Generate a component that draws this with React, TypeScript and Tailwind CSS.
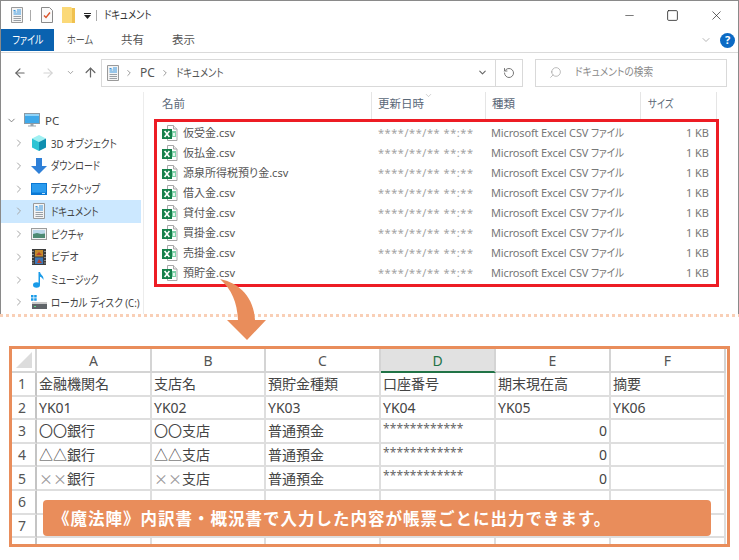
import { ArrowLeft, ArrowRight, ArrowUp, ChevronDown, ChevronRight, Minus, RotateCw, Search, Square, X } from 'lucide-react'
import type { ReactNode } from 'react'

const FONT = "font-['Noto_Sans','Noto_Sans_CJK_JP',sans-serif] [font-feature-settings:'palt']"

function DocIcon({ className = '' }: { className?: string }) {
  return (
    <svg viewBox="0 0 14 16" className={`w-[14px] h-4 shrink-0 ${className}`}>
      <path d="M1.5.5h11v15h-11z" fill="#f4f4f4" stroke="#9a9a9a" />
      <path d="M7 3h4M3.5 5h3M7 5h4M3.5 7h7.5" stroke="#3a96dd" strokeWidth="1" />
      <path d="M3.5 9.5h7.5M3.5 11.5h7.5M3.5 13.5h7.5" stroke="#9aa0a6" strokeWidth="1" />
      <path d="M3.5 3h2v1h-2z" fill="#3a96dd" />
    </svg>
  )
}

function CheckDocIcon() {
  return (
    <svg viewBox="0 0 12 16" className="w-3 h-4 shrink-0">
      <path d="M.5.5h8l3 3v12H.5z" fill="#fafafa" stroke="#8a8a8a" />
      <path d="M3 8.5l2 2 4-5" fill="none" stroke="#d9542b" strokeWidth="1.4" />
    </svg>
  )
}

function FolderIcon() {
  return (
    <svg viewBox="0 0 13 16" className="w-[13px] h-4 shrink-0">
      <path d="M0 0h9l1 1h3v15H0z" fill="#fbd978" />
      <path d="M10 1h3v15h-3z" fill="#f0c14f" />
    </svg>
  )
}

function ExcelIcon() {
  return (
    <svg viewBox="0 0 16 16" className="w-4 h-4 shrink-0">
      <path d="M5.5.5h6l3.5 3.5v11.5h-9.5z" fill="#fff" stroke="#a8a8a8" />
      <path d="M11.5.5v3.5h3.5" fill="#eee" stroke="#a8a8a8" />
      <rect x="10" y="6" width="4" height="6" fill="#7fd0a8" />
      <path d="M11.2 8h1.6v3h-1.6z" fill="#fff" />
      <rect x="0" y="4" width="10" height="10" fill="#14804a" />
      <path d="M2.6 6l4.8 6M7.4 6l-4.8 6" stroke="#fff" strokeWidth="1.6" />
    </svg>
  )
}

function PcIcon() {
  return (
    <svg viewBox="0 0 16 14" className="w-4 h-[14px] shrink-0">
      <rect x=".5" y=".5" width="15" height="10" fill="#3fa9ea" stroke="#8b9aa5" />
      <path d="M1 1h14v2H1z" fill="#8fd3f8" />
      <path d="M6.5 11h3v1.5h-3zM4 12.5h8v1H4z" fill="#9aa5ad" />
    </svg>
  )
}

function CubeIcon() {
  return (
    <svg viewBox="0 0 16 16" className="w-4 h-4 shrink-0">
      <path d="M8 0l7 3.5L8 7 1 3.5z" fill="#9ff0f2" />
      <path d="M1 3.5L8 7v9l-7-3.5z" fill="#2cc4d4" />
      <path d="M15 3.5L8 7v9l7-3.5z" fill="#0f8fb0" />
    </svg>
  )
}

function DownloadIcon() {
  return (
    <svg viewBox="0 0 16 16" className="w-4 h-4 shrink-0">
      <path d="M5 0h6v8h5l-8 8-8-8h5z" fill="#2f80d8" />
    </svg>
  )
}

function DesktopIcon() {
  return (
    <svg viewBox="0 0 16 12" className="w-4 h-3 shrink-0">
      <rect width="16" height="12" fill="#0a78d4" />
      <rect x="1" y="1" width="14" height="8.5" fill="#2a9bee" />
      <rect x="11" y="10" width="3" height="1" fill="#bfe2fa" />
    </svg>
  )
}

function PictureIcon() {
  return (
    <svg viewBox="0 0 16 12" className="w-4 h-3 shrink-0">
      <rect x=".5" y=".5" width="15" height="11" fill="#f2f2f2" stroke="#9c9c9c" />
      <rect x="2" y="2" width="12" height="4" fill="#bcd8ea" />
      <path d="M2 6l4-1 4 1 4-.5V10H2z" fill="#4d8a72" />
    </svg>
  )
}

function VideoIcon() {
  return (
    <svg viewBox="0 0 14 16" className="w-[14px] h-4 shrink-0">
      <rect width="14" height="16" fill="#3c3c3c" />
      <rect x="3" y="1" width="8" height="6.5" fill="#c48a2c" />
      <rect x="3" y="8.5" width="8" height="6.5" fill="#3d78b8" />
      <path d="M4 6l3-3 3 3zM5 14l2-4 3 4z" fill="#b8402c" />
      <path d="M1 2v1M1 5v1M1 8v1M1 11v1M1 13.5v1M13 2v1M13 5v1M13 8v1M13 11v1M13 13.5v1" stroke="#ddd" />
    </svg>
  )
}

function MusicIcon() {
  return (
    <svg viewBox="0 0 16 16" className="w-4 h-4 shrink-0">
      <ellipse cx="5.5" cy="13" rx="3.5" ry="2.8" fill="#1a9be8" />
      <path d="M7.5 13V0h1.5c.5 3 4 3.5 3.5 8-.8-2-2.5-3-3.5-3.3V13z" fill="#1a9be8" />
    </svg>
  )
}

function DiskIcon() {
  return (
    <svg viewBox="0 0 16 14" className="w-4 h-[14px] shrink-0">
      <path d="M0 0h2.5v2.5H0zM3.2 0h2.5v2.5H3.2zM0 3.2h2.5v2.5H0zM3.2 3.2h2.5v2.5H3.2z" fill="#1a9be8" />
      <rect x="1" y="7" width="15" height="2" fill="#c8c8c8" />
      <rect x="1" y="9" width="15" height="5" fill="#5f6468" />
      <rect x="3" y="11" width="2" height="1" fill="#5fe08a" />
    </svg>
  )
}

// kana in the shot is much narrower than Noto's, so squeeze it horizontally
const tree: { label: string; icon: ReactNode; active?: boolean; squeeze: string }[] = [
  { label: '3D オブジェクト', icon: <CubeIcon />, squeeze: 'scale-x-[0.84]' },
  { label: 'ダウンロード', icon: <DownloadIcon />, squeeze: 'scale-x-[0.78]' },
  { label: 'デスクトップ', icon: <DesktopIcon />, squeeze: 'scale-x-[0.82]' },
  { label: 'ドキュメント', icon: <DocIcon />, active: true, squeeze: 'scale-x-[0.81]' },
  { label: 'ピクチャ', icon: <PictureIcon />, squeeze: 'scale-x-[0.8]' },
  { label: 'ビデオ', icon: <VideoIcon />, squeeze: 'scale-x-[0.86]' },
  { label: 'ミュージック', icon: <MusicIcon />, squeeze: 'scale-x-[0.78]' },
  { label: 'ローカル ディスク (C:)', icon: <DiskIcon />, squeeze: 'scale-x-[0.83]' },
]

const files = ['仮受金.csv', '仮払金.csv', '源泉所得税預り金.csv', '借入金.csv', '貸付金.csv', '買掛金.csv', '売掛金.csv', '預貯金.csv']

const columns = ['A', 'B', 'C', 'D', 'E', 'F']

const rows: string[][] = [
  ['金融機関名', '支店名', '預貯金種類', '口座番号', '期末現在高', '摘要'],
  ['YK01', 'YK02', 'YK03', 'YK04', 'YK05', 'YK06'],
  ['〇〇銀行', '〇〇支店', '普通預金', '************', '0', ''],
  ['△△銀行', '△△支店', '普通預金', '************', '0', ''],
  ['××銀行', '××支店', '普通預金', '************', '0', ''],
  ['', '', '', '', '', ''],
  ['', '', '', '', '', ''],
]

function cellClass(cell: string): string {
  if (cell.startsWith('*')) return "text-[12px] text-[#666] tracking-[0.1px] pb-[4px] font-['Noto_Sans',sans-serif]"
  if (cell === '0') return "justify-end font-['Noto_Sans',sans-serif]"
  if (cell.startsWith('YK')) return "font-['Noto_Sans',sans-serif]"
  return "font-['Noto_Sans_CJK_JP',sans-serif] [font-feature-settings:normal]"
}

function Explorer() {
  return (
    <div className="h-[314px] overflow-hidden flex flex-col border-x border-t border-[#8a8a8a] bg-white">
      <div className="h-[28px] shrink-0 flex items-center text-[#333]">
        <DocIcon className="ml-[9px]" />
        <div className="w-px h-[11px] bg-[#aaa] ml-[6px]" />
        <div className="ml-[10px]"><CheckDocIcon /></div>
        <div className="ml-[9px]"><FolderIcon /></div>
        <svg viewBox="0 0 7 6" className="w-[7px] h-[6px] ml-[9px] mt-[2px]">
          <path d="M0 0h7v1H0zM0 2h7L3.5 6z" fill="#222" />
        </svg>
        <div className="w-px h-[11px] bg-[#aaa] ml-[5px]" />
        <span className="ml-[7px] text-[11.5px] origin-left scale-x-[0.81]">ドキュメント</span>
        <div className="ml-auto flex items-center">
          <Minus size={13} strokeWidth={1.1} className="text-[#222] mr-[30px]" />
          <Square size={13} strokeWidth={1.5} className="text-[#222] mr-[30px]" />
          <X size={15} strokeWidth={1.1} className="text-[#222] mr-[14px]" />
        </div>
      </div>
      <div className="h-[24px] shrink-0 flex items-stretch border-b border-[#dadada] text-[11.5px] text-[#555]">
        <div className="w-[53px] h-[22px] bg-[#0a62b0] text-white flex items-center justify-center">
          <span className="scale-x-[0.78] whitespace-nowrap">ファイル</span>
        </div>
        <div className="ml-[13px] w-[33px] flex items-center h-[22px]">
          <span className="origin-left scale-x-[0.79] whitespace-nowrap">ホーム</span>
        </div>
        <div className="ml-[21px] flex items-center h-[22px]">共有</div>
        <div className="ml-[28px] flex items-center h-[22px]">表示</div>
        <div className="ml-auto flex items-center h-[22px]">
          <ChevronDown size={12} className="text-[#b5b5b5] mr-[8px]" />
          <div className="w-[15px] h-[15px] rounded-full bg-[#0b6ac4] text-white text-[11px] font-bold flex items-center justify-center mr-[3px]">?</div>
        </div>
      </div>
      <div className="h-[39px] shrink-0 flex items-center text-[#555]">
        <ArrowLeft size={14} className="ml-[12px] text-[#666]" />
        <ArrowRight size={14} className="ml-[14px] text-[#d4d4d4]" />
        <ChevronDown size={9} className="ml-[11px] text-[#888]" />
        <ArrowUp size={15} className="ml-[8px] text-[#666]" />
        <div className="ml-[3px] w-[422px] h-[28px] border border-[#d9d9d9] flex items-center text-[12px]">
          <DocIcon className="ml-[4px]" />
          <ChevronRight size={10} className="ml-[4px] text-[#888]" />
          <span className="ml-[6px]">PC</span>
          <ChevronRight size={10} className="ml-[5px] text-[#888]" />
          <span className="ml-[6px] text-[11.5px] origin-left scale-x-[0.81] whitespace-nowrap">ドキュメント</span>
          <ChevronDown size={11} strokeWidth={2.4} className="ml-auto mr-[7px] text-[#666]" />
          <div className="w-[27px] h-full border-l border-[#d9d9d9] flex items-center justify-center">
            <RotateCw size={12} className="text-[#777] -scale-x-100" />
          </div>
        </div>
        <div className="ml-[12px] w-[192px] h-[28px] border border-[#d9d9d9] flex items-center text-[11px] text-[#8a8a8a]">
          <Search size={13} strokeWidth={1.2} className="ml-[13px] -scale-x-100 text-[#999]" />
          <span className="ml-[13px] origin-left scale-x-[0.88] whitespace-nowrap">ドキュメントの検索</span>
        </div>
      </div>
      <div className="flex-1 min-h-0 flex">
        <div className="w-[143px] shrink-0 border-r border-[#ececec] pt-[17px] text-[11.5px] text-[#444]">
          <div className="h-[22.75px] flex items-center">
            <ChevronDown size={11} strokeWidth={2} className="ml-[5px] text-[#777] shrink-0" />
            <div className="ml-[7px] shrink-0"><PcIcon /></div>
            <span className="ml-[5px]">PC</span>
          </div>
          {tree.map((item) => (
            <div
              key={item.label}
              className={`h-[22.75px] mr-[2px] flex items-center ${item.active ? 'bg-[#cce8ff]' : ''}`}
            >
              <ChevronRight size={12} strokeWidth={2} className="ml-[12px] text-[#a6a6a6] shrink-0" />
              <div className="w-[16px] ml-[6px] flex justify-center shrink-0">{item.icon}</div>
              <span className={`ml-[4px] whitespace-nowrap origin-left ${item.squeeze}`}>{item.label}</span>
            </div>
          ))}
        </div>
        <div className="flex-1 min-w-0">
          <div className="h-[27px] grid grid-cols-[228px_114px_155px_76px] text-[11.5px] text-[#5a6878]">
            <div className="border-r border-[#e5e5e5] pl-[18px] pt-[3px]">名前</div>
            <div className="relative border-r border-[#e5e5e5] pl-[6px] pt-[3px]">
              更新日時
              <ChevronDown size={9} strokeWidth={1.2} className="absolute left-[52px] -top-[1px] text-[#999]" />
            </div>
            <div className="border-r border-[#e5e5e5] pl-[6px] pt-[3px]">種類</div>
            <div className="border-r border-[#e5e5e5] pl-[7px] pt-[3px]">
              <span className="inline-block origin-left scale-x-[0.81]">サイズ</span>
            </div>
          </div>
          <div className="ml-[10px] w-[565px] h-[168px] border-[3px] border-[#ed1c24] pt-px">
            {files.map((name) => (
              <div key={name} className="h-[20px] pl-[5px] pr-[7px] grid grid-cols-[21px_195px_113px_1fr_auto] items-center text-[11px] text-[#555]">
                <ExcelIcon />
                <span>{name}</span>
                <span className="text-[#a3a3a3] tracking-[0.55px]">****/**/** **:**</span>
                <span className="text-[#777] tracking-[-0.15px]">
                  Microsoft Excel CSV <span className="inline-block origin-left scale-x-[0.88]">ファイル</span>
                </span>
                <span className="text-[#777]">1 KB</span>
              </div>
            ))}
          </div>
        </div>
      </div>
    </div>
  )
}

function Sheet() {
  return (
    <div className="mt-[29px] mx-[9px] h-[201px] border-[3px] border-[#e98d5b] overflow-hidden text-[#444]">
      <div className="grid grid-cols-[25px_115px_114px_115px_115px_115px_115px] grid-rows-[24px] auto-rows-[23.6px] text-[14px]">
        <div className="border-r-2 border-b-2 border-[#d4d4d4] flex items-center justify-end pr-[3px]">
          <svg viewBox="0 0 16 16" className="w-4 h-4">
            <path d="M16 0v16H0z" fill="#dcdcdc" />
          </svg>
        </div>
        {columns.map((col) => (
          <div
            key={col}
            className={`flex items-center justify-center border-b-2 border-r-2 ${
              col === 'D' ? 'bg-[#e1e1e1] text-[#217346] border-b-[#217346] border-r-[#d4d4d4]' : 'border-[#d4d4d4] text-[#555]'
            }`}
          >
            {col}
          </div>
        ))}
        {rows.map((cells, i) => (
          <div key={i} className="contents">
            <div className="border-r-2 border-b-2 border-r-[#c4c4c4] border-b-[#dedede] flex items-center justify-center pr-[3px] text-[#555]">
              {i + 1}
            </div>
            {cells.map((cell, j) => (
              <div
                key={j}
                className={`border-r-2 border-b-2 border-[#dedede] px-[2px] flex items-center whitespace-nowrap ${cellClass(cell)}`}
              >
                {cell.startsWith('×') ? (
                  <span>
                    <span className="text-[#999]">××</span>
                    {cell.slice(2)}
                  </span>
                ) : (
                  cell
                )}
              </div>
            ))}
          </div>
        ))}
        <div className="border-r-2 border-r-[#c4c4c4] h-[6px]" />
        {columns.map((col) => (
          <div key={col} className="border-r-2 border-[#dedede] h-[6px]" />
        ))}
      </div>
    </div>
  )
}

export default function App() {
  return (
    <div className={`relative w-[739px] h-[560px] overflow-hidden bg-white ${FONT}`}>
      <Explorer />
      <div className="h-[3px] bg-[repeating-linear-gradient(90deg,#f9cfb6_0_3px,transparent_3px_6px)]" />
      <Sheet />
      <svg viewBox="0 0 739 560" className="absolute inset-0 w-[739px] h-[560px] pointer-events-none">
        <path d="M220 279C240 283 254 298 255 320H266L247 340 227 320H238C237 302 232 290 220 279Z" fill="#e98d5b" />
      </svg>
      <div className="absolute left-[43px] top-[500px] w-[668px] h-[36px] rounded-[4px] bg-[#e98d5b] flex items-center pl-[10px] text-white text-[16.5px] font-bold tracking-[1px] font-['Noto_Sans_CJK_JP',sans-serif] [font-feature-settings:normal]">
        《魔法陣》内訳書・概況書で入力した内容が帳票ごとに出力できます。
      </div>
    </div>
  )
}
